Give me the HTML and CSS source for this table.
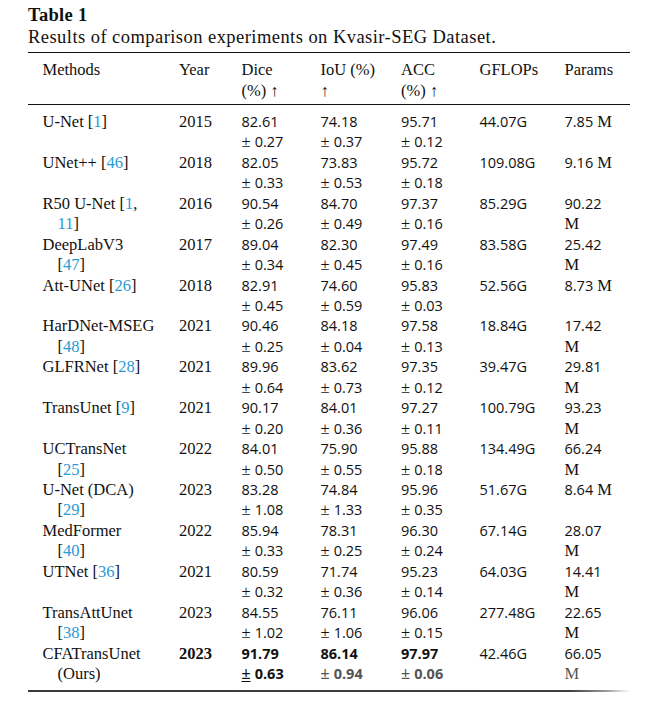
FILE: index.html
```html
<!DOCTYPE html>
<html>
<head>
<meta charset="utf-8">
<link rel="stylesheet" href="styles.css">
</head>
<body>
<div class="wrap">
  <p class="title">Table 1</p>
  <p class="caption">Results of comparison experiments on Kvasir-SEG Dataset.</p>
  <table>
    <colgroup>
      <col class="c1"><col class="c2"><col class="c3"><col class="c4"><col class="c5"><col class="c6"><col class="c7">
    </colgroup>
    <thead>
      <tr>
        <th class="first">Methods</th>
        <th>Year</th>
        <th>Dice<span class="line">(%) ↑</span></th>
        <th>IoU (%)<span class="line">↑</span></th>
        <th>ACC<span class="line">(%) ↑</span></th>
        <th>GFLOPs</th>
        <th>Params</th>
      </tr>
    </thead>
    <tbody>
      <tr>
        <td class="first">U-Net [<a>1</a>]</td><td>2015</td>
        <td><span class="n">82.61</span><span class="line">± <span class="n">0.27</span></span></td>
        <td><span class="n">74.18</span><span class="line">± <span class="n">0.37</span></span></td>
        <td><span class="n">95.71</span><span class="line">± <span class="n">0.12</span></span></td>
        <td class="n">44.07G</td><td><span class="n">7.85</span> M</td>
      </tr>
      <tr>
        <td class="first">UNet++ [<a>46</a>]</td><td>2018</td>
        <td><span class="n">82.05</span><span class="line">± <span class="n">0.33</span></span></td>
        <td><span class="n">73.83</span><span class="line">± <span class="n">0.53</span></span></td>
        <td><span class="n">95.72</span><span class="line">± <span class="n">0.18</span></span></td>
        <td class="n">109.08G</td><td><span class="n">9.16</span> M</td>
      </tr>
      <tr>
        <td class="first">R50 U-Net [<a>1</a>,<span class="cont"><a>11</a>]</span></td><td>2016</td>
        <td><span class="n">90.54</span><span class="line">± <span class="n">0.26</span></span></td>
        <td><span class="n">84.70</span><span class="line">± <span class="n">0.49</span></span></td>
        <td><span class="n">97.37</span><span class="line">± <span class="n">0.16</span></span></td>
        <td class="n">85.29G</td><td><span class="n">90.22</span><span class="line">M</span></td>
      </tr>
      <tr>
        <td class="first">DeepLabV3<span class="cont">[<a>47</a>]</span></td><td>2017</td>
        <td><span class="n">89.04</span><span class="line">± <span class="n">0.34</span></span></td>
        <td><span class="n">82.30</span><span class="line">± <span class="n">0.45</span></span></td>
        <td><span class="n">97.49</span><span class="line">± <span class="n">0.16</span></span></td>
        <td class="n">83.58G</td><td><span class="n">25.42</span><span class="line">M</span></td>
      </tr>
      <tr>
        <td class="first">Att-UNet [<a>26</a>]</td><td>2018</td>
        <td><span class="n">82.91</span><span class="line">± <span class="n">0.45</span></span></td>
        <td><span class="n">74.60</span><span class="line">± <span class="n">0.59</span></span></td>
        <td><span class="n">95.83</span><span class="line">± <span class="n">0.03</span></span></td>
        <td class="n">52.56G</td><td><span class="n">8.73</span> M</td>
      </tr>
      <tr>
        <td class="first">HarDNet-MSEG<span class="cont">[<a>48</a>]</span></td><td>2021</td>
        <td><span class="n">90.46</span><span class="line">± <span class="n">0.25</span></span></td>
        <td><span class="n">84.18</span><span class="line">± <span class="n">0.04</span></span></td>
        <td><span class="n">97.58</span><span class="line">± <span class="n">0.13</span></span></td>
        <td class="n">18.84G</td><td><span class="n">17.42</span><span class="line">M</span></td>
      </tr>
      <tr>
        <td class="first">GLFRNet [<a>28</a>]</td><td>2021</td>
        <td><span class="n">89.96</span><span class="line">± <span class="n">0.64</span></span></td>
        <td><span class="n">83.62</span><span class="line">± <span class="n">0.73</span></span></td>
        <td><span class="n">97.35</span><span class="line">± <span class="n">0.12</span></span></td>
        <td class="n">39.47G</td><td><span class="n">29.81</span><span class="line">M</span></td>
      </tr>
      <tr>
        <td class="first">TransUnet [<a>9</a>]</td><td>2021</td>
        <td><span class="n">90.17</span><span class="line">± <span class="n">0.20</span></span></td>
        <td><span class="n">84.01</span><span class="line">± <span class="n">0.36</span></span></td>
        <td><span class="n">97.27</span><span class="line">± <span class="n">0.11</span></span></td>
        <td class="n">100.79G</td><td><span class="n">93.23</span><span class="line">M</span></td>
      </tr>
      <tr>
        <td class="first">UCTransNet<span class="cont">[<a>25</a>]</span></td><td>2022</td>
        <td><span class="n">84.01</span><span class="line">± <span class="n">0.50</span></span></td>
        <td><span class="n">75.90</span><span class="line">± <span class="n">0.55</span></span></td>
        <td><span class="n">95.88</span><span class="line">± <span class="n">0.18</span></span></td>
        <td class="n">134.49G</td><td><span class="n">66.24</span><span class="line">M</span></td>
      </tr>
      <tr>
        <td class="first">U-Net (DCA)<span class="cont">[<a>29</a>]</span></td><td>2023</td>
        <td><span class="n">83.28</span><span class="line">± <span class="n">1.08</span></span></td>
        <td><span class="n">74.84</span><span class="line">± <span class="n">1.33</span></span></td>
        <td><span class="n">95.96</span><span class="line">± <span class="n">0.35</span></span></td>
        <td class="n">51.67G</td><td><span class="n">8.64</span> M</td>
      </tr>
      <tr>
        <td class="first">MedFormer<span class="cont">[<a>40</a>]</span></td><td>2022</td>
        <td><span class="n">85.94</span><span class="line">± <span class="n">0.33</span></span></td>
        <td><span class="n">78.31</span><span class="line">± <span class="n">0.25</span></span></td>
        <td><span class="n">96.30</span><span class="line">± <span class="n">0.24</span></span></td>
        <td class="n">67.14G</td><td><span class="n">28.07</span><span class="line">M</span></td>
      </tr>
      <tr>
        <td class="first">UTNet [<a>36</a>]</td><td>2021</td>
        <td><span class="n">80.59</span><span class="line">± <span class="n">0.32</span></span></td>
        <td><span class="n">71.74</span><span class="line">± <span class="n">0.36</span></span></td>
        <td><span class="n">95.23</span><span class="line">± <span class="n">0.14</span></span></td>
        <td class="n">64.03G</td><td><span class="n">14.41</span><span class="line">M</span></td>
      </tr>
      <tr>
        <td class="first">TransAttUnet<span class="cont">[<a>38</a>]</span></td><td>2023</td>
        <td><span class="n">84.55</span><span class="line">± <span class="n">1.02</span></span></td>
        <td><span class="n">76.11</span><span class="line">± <span class="n">1.06</span></span></td>
        <td><span class="n">96.06</span><span class="line">± <span class="n">0.15</span></span></td>
        <td class="n">277.48G</td><td><span class="n">22.65</span><span class="line">M</span></td>
      </tr>
      <tr class="last">
        <td class="first">CFATransUnet<span class="cont">(Ours)</span></td><td><b>2023</b></td>
        <td><b class="n">91.79</b><b class="line"><u>±</u> <span class="n">0.63</span></b></td>
        <td><b class="n">86.14</b><b class="line faded">± <span class="n">0.94</span></b></td>
        <td><b class="n">97.97</b><b class="line faded">± <span class="n">0.06</span></b></td>
        <td class="n">42.46G</td><td><span class="n">66.05</span><span class="line faded">M</span></td>
      </tr>
    </tbody>
  </table>
  <div class="endrule"></div>
</div>
</body>
</html>
```

FILE: styles.css
```css
html, body {
  margin: 0;
  padding: 0;
  background: #ffffff;
}

body {
  color: #111111;
  font-family: "Liberation Serif", "Times New Roman", serif;
}

.wrap {
  padding: 3.5px 0 0 28px;
  width: 602px;
}

.title {
  margin: 0;
  font-size: 18.5px;
  line-height: 22px;
  font-weight: bold;
  letter-spacing: 0.3px;
}

.caption {
  margin: 0 0 4.5px;
  font-size: 18.5px;
  line-height: 22px;
  letter-spacing: 0.45px;
}

table {
  width: 602px;
  table-layout: fixed;
  border-collapse: separate;
  border-spacing: 0;
  font-size: 16.5px;
  line-height: 20.45px;
}

.c1 { width: 151px; }
.c2 { width: 62.5px; }
.c3 { width: 79px; }
.c4 { width: 80.5px; }
.c5 { width: 78.5px; }
.c6 { width: 85px; }
.c7 { width: 65.5px; }

th, td {
  padding: 0;
  text-align: left;
  vertical-align: baseline;
  font-weight: normal;
  white-space: nowrap;
}

th.first, td.first {
  padding-left: 14.5px;
}

thead th {
  padding-top: 7.2px;
  padding-bottom: 3.4px;
  border-top: 1px solid #111111;
  border-bottom: 1px solid #111111;
}

tbody tr:first-child td {
  padding-top: 6.4px;
}

tbody tr.last td {
  padding-bottom: 5.4px;
}

.line {
  display: block;
}

.cont {
  display: block;
  padding-left: 15px;
}

a {
  color: #2a9ad6;
}

.n {
  font-family: "Open Sans", "Noto Sans", sans-serif;
  font-size: 14.5px;
}

b {
  font-weight: bold;
}

u {
  text-decoration: underline;
  text-underline-offset: 2px;
}

.faded {
  color: #555555;
}

.endrule {
  height: 2px;
  width: 602px;
  background: linear-gradient(to right, #3a3a3a 0%, #3f3f3f 90%, #9a9a9a 96%, rgba(255,255,255,0) 100%);
}
```
